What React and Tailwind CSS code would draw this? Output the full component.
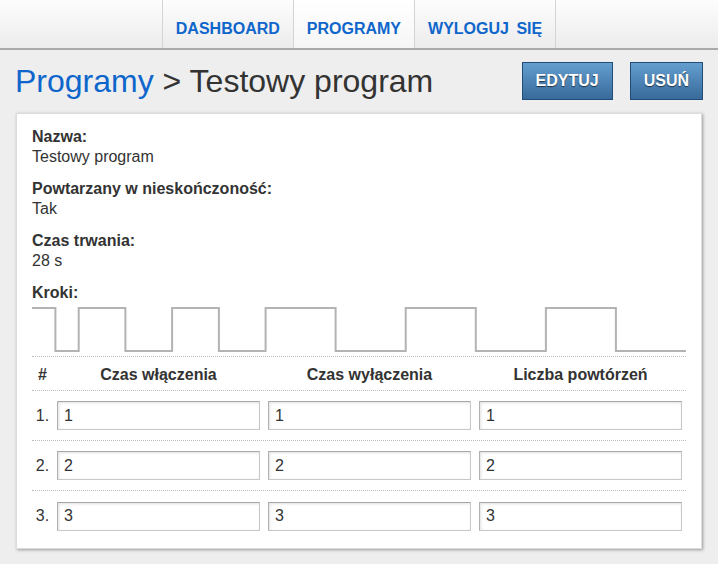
import React from "react";

const steps = [
    { on: 1, off: 1, repeat: 1 },
    { on: 2, off: 2, repeat: 2 },
    { on: 3, off: 3, repeat: 3 },
];

const Waveform = ({ width = 654, height = 50 }) => {
    const total = steps.reduce((s, st) => s + (st.on + st.off) * st.repeat, 0);
    const k = width / total;
    const hi = 3;
    const lo = 46;
    let x = 0;
    let d = `M0 ${hi}`;
    steps.forEach((st) => {
        for (let i = 0; i < st.repeat; i++) {
            x += st.on * k;
            d += ` H${x.toFixed(1)} V${lo}`;
            x += st.off * k;
            d += ` H${x.toFixed(1)} V${hi}`;
        }
    });
    // last step ends low, trim trailing rise
    d = d.replace(/ V3$/, "");
    return (
        <svg width={width} height={height} className="block">
            <path d={d} fill="none" stroke="#b3b3b3" strokeWidth="2" />
        </svg>
    );
};

const Field = ({ label, value }) => (
    <div className="mb-3">
        <div className="font-bold leading-5">{label}</div>
        <div className="leading-5">{value}</div>
    </div>
);

const NavTab = ({ children, active }) => (
    <a
        href="#"
        className={
            "flex items-center pt-[9px] px-[13px] border-l border-[#d4d4d4] font-bold text-[16px] text-[#0e66cc] " +
            (active ? "bg-gradient-to-b from-[#ffffff] to-[#f6f6f6]" : "")
        }
    >
        {children}
    </a>
);

const Btn = ({ children }) => (
    <button className="h-[38px] px-[13px] border border-[#1f4d78] bg-gradient-to-b from-[#649fd0] to-[#386a9b] text-white font-bold text-[16px] [text-shadow:0_1px_1px_rgba(0,0,0,0.6)]">
        {children}
    </button>
);

const rows = [1, 2, 3];

export default function App() {
    return (
        <div className="min-h-[564px] bg-[#eeeeee] text-[#333333] font-['Liberation_Sans',Arial,sans-serif] text-[16px]">
            {/* Nav */}
            <div className="h-[50px] bg-gradient-to-b from-[#fdfdfd] to-[#ececec] border-b-2 border-[#a9a9a9] flex justify-center">
                <NavTab>DASHBOARD</NavTab>
                <NavTab active>PROGRAMY</NavTab>
                <NavTab>
                    <span className="[word-spacing:3px]">WYLOGUJ SIĘ</span>
                </NavTab>
                <div className="border-l border-[#d4d4d4]" />
            </div>

            <div className="px-4">
                {/* Title row */}
                <div className="mt-3 flex items-center h-[38px]">
                    <h1 className="text-[32px] leading-none flex-1 -ml-px">
                        <span className="text-[#0e66cc]">Programy</span>
                        <span className="text-[#333333]"> &gt; Testowy program</span>
                    </h1>
                    <div className="flex gap-[17px] -mr-px">
                        <Btn>EDYTUJ</Btn>
                        <Btn>USUŃ</Btn>
                    </div>
                </div>

                {/* Card */}
                <div className="mt-[13px] bg-white border border-[#dcdcdc] shadow-[1px_1px_3px_rgba(0,0,0,0.35)] px-[15px] pt-[13px] pb-[7px]">
                    <Field label="Nazwa:" value="Testowy program" />
                    <Field label="Powtarzany w nieskończoność:" value="Tak" />
                    <Field label="Czas trwania:" value="28 s" />
                    <div className="font-bold leading-5">Kroki:</div>
                    <div className="mt-[2px]">
                        <Waveform />
                    </div>

                    {/* Steps table */}
                    <div className="mt-px border-t border-dotted border-[#bdbdbd]">
                        <div className="h-[34px] pt-[2px] flex items-center font-bold border-b border-dotted border-[#bdbdbd]">
                            <div className="w-[21px] text-center">#</div>
                            <div className="flex-1 text-center">Czas włączenia</div>
                            <div className="flex-1 text-center">Czas wyłączenia</div>
                            <div className="flex-1 text-center">Liczba powtórzeń</div>
                        </div>
                        {rows.map((n, i) => (
                            <div
                                key={n}
                                className={
                                    "h-[50px] flex items-center " +
                                    (i < rows.length - 1 ? "border-b border-dotted border-[#bdbdbd]" : "")
                                }
                            >
                                <div className="w-[21px] text-center">{n}.</div>
                                {[0, 1, 2].map((c) => (
                                    <div key={c} className="flex-1 px-1">
                                        <input
                                            readOnly
                                            value={n}
                                            className="w-full h-[29px] px-[6px] border border-[#c8c8c8] border-t-[#a8a8a8] border-l-[#b0b0b0] shadow-[inset_1px_1px_3px_rgba(0,0,0,0.12)] text-[#333] text-[16px] outline-none"
                                        />
                                    </div>
                                ))}
                            </div>
                        ))}
                    </div>
                </div>
            </div>
        </div>
    );
}
